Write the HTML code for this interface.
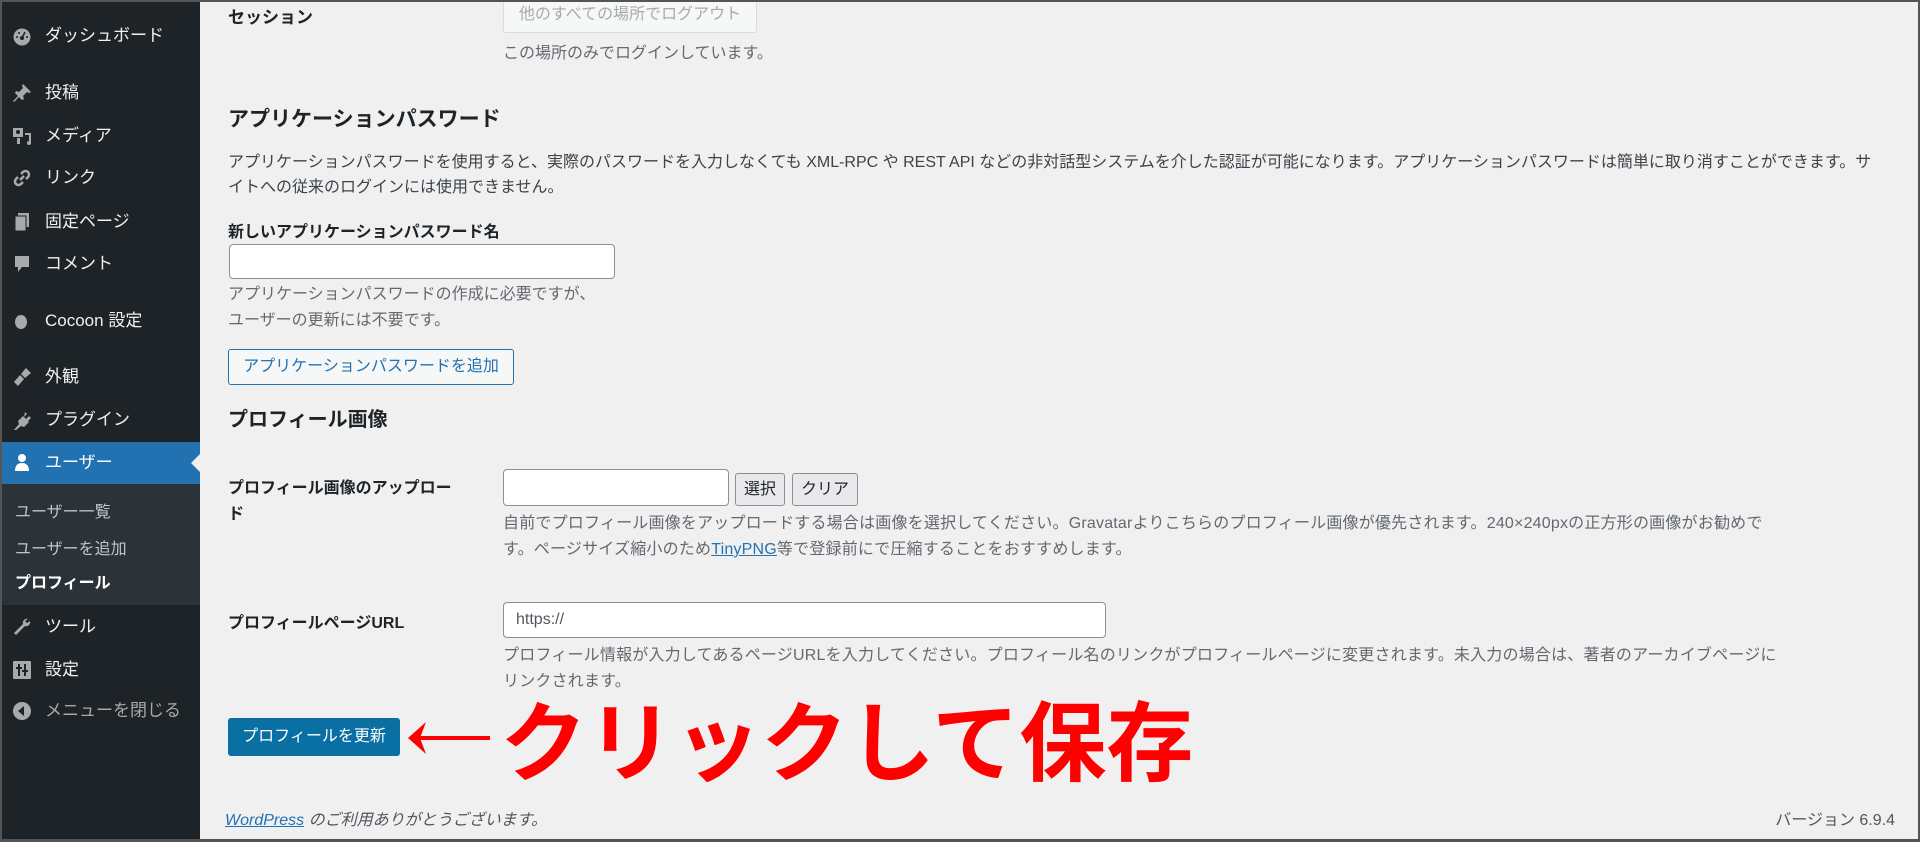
<!DOCTYPE html>
<html><head><meta charset="utf-8"><style>
*{box-sizing:border-box;margin:0;padding:0}
html,body{width:1920px;height:842px;overflow:hidden}
body{background:#f0f0f1;font-family:"Liberation Sans","Noto Sans CJK JP",sans-serif;color:#3c434a;font-size:16px;position:relative}
.frame{position:absolute;left:0;top:0;width:1920px;height:842px;border:2px solid #555;border-bottom-width:3px;pointer-events:none;z-index:10}
#side{position:absolute;left:0;top:0;width:200px;height:842px;background:#1d2327}
.mi{position:absolute;left:0;width:200px;height:40px;color:#f0f0f1;font-size:17px;line-height:40px;padding-left:45px;white-space:nowrap}
.ic{position:absolute;left:12px;top:10px;width:20px;height:20px}
.sub{position:absolute;left:0;top:484px;width:200px;height:121px;background:#2c3338}
.si{position:absolute;left:15px;font-size:16px;color:#c3c4c7;white-space:nowrap}
.a{position:absolute;white-space:nowrap}
.b{font-weight:bold;color:#1d2327}
.inp{position:absolute;background:#fff;border:1px solid #8c8f94;border-radius:4px}
.desc{color:#646970;line-height:26px}
</style></head><body>
<div id="side">
 <div class="mi" style="top:16px"><svg class="ic" viewBox="0 0 20 20"><circle cx="10" cy="11" r="8.5" fill="#a7aaad"/><circle cx="10" cy="12" r="2" fill="#1d2327"/><path d="M10 12L13 6" stroke="#1d2327" stroke-width="1.5"/><circle cx="5" cy="11" r="1" fill="#1d2327"/><circle cx="15" cy="11" r="1" fill="#1d2327"/><circle cx="7" cy="7" r="1" fill="#1d2327"/></svg>ダッシュボード</div>
 <div class="mi" style="top:73px"><svg class="ic" viewBox="0 0 20 20"><path d="M11 1l8 8-2 1-2-1-4 4 1 3-2 1-3-3-5 5-1-1 5-5-3-3 1-2 3 1 4-4-1-2z" fill="#a7aaad"/></svg>投稿</div>
 <div class="mi" style="top:116px"><svg class="ic" viewBox="0 0 20 20"><rect x="1" y="2" width="10" height="9" fill="#a7aaad"/><circle cx="6" cy="6" r="2" fill="#1d2327"/><path d="M13 7h6v10a2 2 0 1 1-2-2V9h-4z" fill="#a7aaad"/><rect x="5" y="12" width="3" height="6" fill="#a7aaad"/></svg>メディア</div>
 <div class="mi" style="top:158px"><svg class="ic" viewBox="0 0 20 20"><path d="M8 12l4-4M9 6l2-2a3 3 0 0 1 5 5l-2 2M11 14l-2 2a3 3 0 0 1-5-5l2-2" stroke="#a7aaad" stroke-width="2.5" fill="none"/></svg>リンク</div>
 <div class="mi" style="top:202px"><svg class="ic" viewBox="0 0 20 20"><rect x="6" y="1" width="11" height="14" fill="#a7aaad"/><rect x="3" y="4" width="11" height="15" fill="#a7aaad" stroke="#1d2327" stroke-width="1"/></svg>固定ページ</div>
 <div class="mi" style="top:244px"><svg class="ic" viewBox="0 0 20 20"><path d="M3 2h14v11h-7l-4 5v-5H3z" fill="#a7aaad"/></svg>コメント</div>
 <div class="mi" style="top:301px"><svg class="ic" viewBox="0 0 20 20"><ellipse cx="9" cy="11" rx="6" ry="7" fill="#a7aaad"/></svg>Cocoon 設定</div>
 <div class="mi" style="top:357px"><svg class="ic" viewBox="0 0 20 20"><path d="M14 1l5 5-6 5-4-4zM8 8l4 4-6 7-4-4z" fill="#a7aaad"/></svg>外観</div>
 <div class="mi" style="top:400px"><svg class="ic" viewBox="0 0 20 20"><path d="M13 2l2 2-3 3 2 2 3-3 2 2-3 3 1 1-5 5-3-1-6 5-1-1 5-6-1-3 5-5 1 1z" fill="#a7aaad"/></svg>プラグイン</div>
 <div class="mi" style="top:442px;height:42px;background:#2271b1;color:#fff;line-height:42px"><svg class="ic" viewBox="0 0 20 20"><circle cx="10" cy="6" r="4" fill="#fff"/><path d="M3 19c0-6 3-8 7-8s7 2 7 8z" fill="#fff"/></svg>ユーザー<div style="position:absolute;right:0;top:12px;width:0;height:0;border:9px solid transparent;border-right-color:#f0f0f1"></div></div>
 <div class="sub"></div>
 <div class="si" style="top:498px">ユーザー一覧</div>
 <div class="si" style="top:535px">ユーザーを追加</div>
 <div class="si" style="top:569px;color:#fff;font-weight:bold">プロフィール</div>
 <div class="mi" style="top:607px"><svg class="ic" viewBox="0 0 20 20"><path d="M16 2a4 4 0 0 0-5 5L2 16l2 2 9-9a4 4 0 0 0 5-5l-3 2-2-2z" fill="#a7aaad"/></svg>ツール</div>
 <div class="mi" style="top:650px"><svg class="ic" viewBox="0 0 20 20"><rect x="1" y="1" width="18" height="18" rx="1" fill="#a7aaad"/><path d="M7 4v12M13 4v12" stroke="#1d2327" stroke-width="2"/><path d="M4 8h6M10 11h6" stroke="#1d2327" stroke-width="2"/></svg>設定</div>
 <div class="mi" style="top:691px;color:#a7aaad"><svg class="ic" viewBox="0 0 20 20"><circle cx="10" cy="10" r="9" fill="#a7aaad"/><path d="M12 5v10l-6-5z" fill="#1d2327"/></svg>メニューを閉じる</div>
</div>

<div class="a b" style="left:228px;top:3px;font-size:17px">セッション</div>
<div class="a" style="left:503px;top:-4px;width:254px;height:37px;border:1px solid #dcdcde;border-radius:3px;background:#f6f7f7;color:#a7aaad;font-size:16px;line-height:36px;text-align:center">他のすべての場所でログアウト</div>
<div class="a desc" style="left:503px;top:41px">この場所のみでログインしています。</div>

<div class="a b" style="left:228px;top:103px;font-size:21px">アプリケーションパスワード</div>
<div class="a" style="left:228px;top:150px;line-height:25px;color:#3c434a">アプリケーションパスワードを使用すると、実際のパスワードを入力しなくても XML-RPC や REST API などの非対話型システムを介した認証が可能になります。アプリケーションパスワードは簡単に取り消すことができます。サ<br>イトへの従来のログインには使用できません。</div>
<div class="a b" style="left:228px;top:218px;font-size:16px">新しいアプリケーションパスワード名</div>
<div class="inp" style="left:229px;top:244px;width:386px;height:35px"></div>
<div class="a desc" style="left:228px;top:282px">アプリケーションパスワードの作成に必要ですが、<br>ユーザーの更新には不要です。</div>
<div class="a" style="left:228px;top:349px;width:286px;height:36px;border:1px solid #2271b1;border-radius:3px;background:#f6f7f7;color:#2271b1;line-height:34px;text-align:center">アプリケーションパスワードを追加</div>

<div class="a b" style="left:228px;top:403px;font-size:20px">プロフィール画像</div>
<div class="a b" style="left:228px;top:476px;font-size:16px;line-height:26px">プロフィール画像のアップロー<br>ド</div>
<div class="inp" style="left:503px;top:469px;width:226px;height:37px"></div>
<div class="a" style="left:735px;top:473px;width:50px;height:33px;border:1px solid #8c8f94;border-radius:3px;background:#e9e9ed;color:#1d2327;text-align:center;line-height:31px">選択</div>
<div class="a" style="left:792px;top:473px;width:66px;height:33px;border:1px solid #8c8f94;border-radius:3px;background:#e9e9ed;color:#1d2327;text-align:center;line-height:31px">クリア</div>
<div class="a desc" style="left:503px;top:511px;letter-spacing:0.2px">自前でプロフィール画像をアップロードする場合は画像を選択してください。Gravatarよりこちらのプロフィール画像が優先されます。240×240pxの正方形の画像がお勧めで<br>す。ページサイズ縮小のため<span style="color:#2271b1;text-decoration:underline">TinyPNG</span>等で登録前にで圧縮することをおすすめします。</div>

<div class="a b" style="left:228px;top:609px;font-size:16px">プロフィールページURL</div>
<div class="inp" style="left:503px;top:602px;width:603px;height:36px;padding-left:12px;line-height:34px;color:#50575e">https://</div>
<div class="a desc" style="left:503px;top:643px;letter-spacing:0.2px">プロフィール情報が入力してあるページURLを入力してください。プロフィール名のリンクがプロフィールページに変更されます。未入力の場合は、著者のアーカイブページに<br>リンクされます。</div>

<div class="a" style="left:228px;top:718px;width:172px;height:38px;background:#0a6fa2;border-radius:3px;color:#fff;text-align:center;line-height:38px">プロフィールを更新</div>
<svg class="a" style="left:406px;top:718px" width="86" height="40" viewBox="0 0 86 40"><path d="M6 20H84" stroke="#f00" stroke-width="4"/><path d="M2 20L20 4L14 20L20 36Z" fill="#f00"/></svg>
<div class="a" style="left:500px;top:690px;font-size:87px;font-weight:bold;color:#f00;line-height:110px">クリックして保存</div>

<div class="a" style="left:225px;top:806px;font-style:italic;color:#50575e"><span style="color:#2271b1;text-decoration:underline">WordPress</span> のご利用ありがとうございます。</div>
<div class="a" style="right:25px;top:806px;color:#50575e">バージョン 6.9.4</div>
<div class="frame"></div>
</body></html>
